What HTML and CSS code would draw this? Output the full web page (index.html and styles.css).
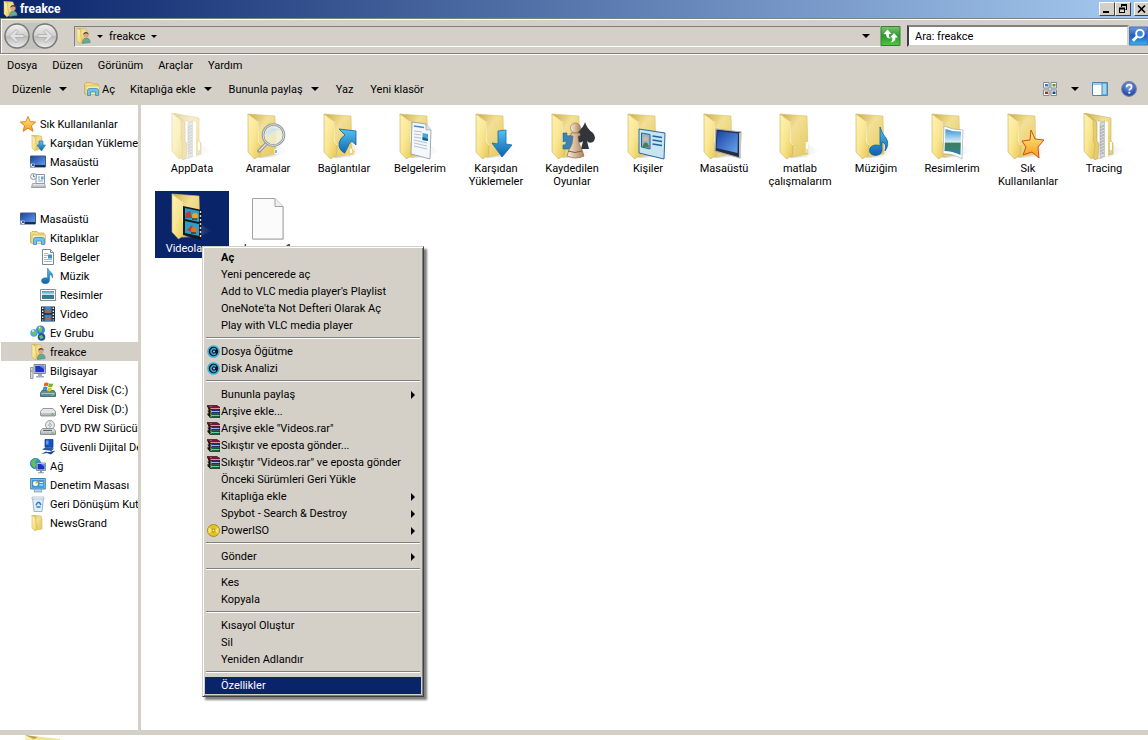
FILE: index.html
```html
<!DOCTYPE html>
<html lang="tr">
<head>
<meta charset="utf-8">
<title>freakce</title>
<link rel="stylesheet" href="styles.css">
</head>
<body>
<svg class="sprite" width="0" height="0" aria-hidden="true">
  <defs>
    <linearGradient id="g-flap" x1="0" y1="0" x2="1" y2="1"><stop offset="0" stop-color="#fdf3b8"/><stop offset=".5" stop-color="#f9e690"/><stop offset="1" stop-color="#e6c655"/></linearGradient>
    <linearGradient id="g-back" x1="0" y1="0" x2="1" y2="1"><stop offset="0" stop-color="#c9ab4c"/><stop offset=".4" stop-color="#f3e095"/><stop offset="1" stop-color="#e5c75c"/></linearGradient>
    <linearGradient id="g-blue" x1="0" y1="0" x2="0" y2="1"><stop offset="0" stop-color="#57c2f2"/><stop offset="1" stop-color="#0b62ad"/></linearGradient>
    <linearGradient id="g-screen" x1="0" y1="0" x2="1" y2="1"><stop offset="0" stop-color="#1742a0"/><stop offset="1" stop-color="#6ba4f2"/></linearGradient>
    <linearGradient id="g-star" x1="0" y1="0" x2="0" y2="1"><stop offset="0" stop-color="#fff08a"/><stop offset="1" stop-color="#f69a1c"/></linearGradient>
    <linearGradient id="g-green" x1="0" y1="0" x2="0" y2="1"><stop offset="0" stop-color="#7cc46d"/><stop offset=".5" stop-color="#2c9a2e"/><stop offset="1" stop-color="#4cc83e"/></linearGradient>
    <linearGradient id="g-find" x1="0" y1="0" x2="0" y2="1"><stop offset="0" stop-color="#6f9be0"/><stop offset=".5" stop-color="#1e5fc4"/><stop offset="1" stop-color="#37b4ee"/></linearGradient>
    <linearGradient id="g-pic" x1="0" y1="0" x2="0" y2="1"><stop offset="0" stop-color="#3f93d6"/><stop offset=".5" stop-color="#d5eef8"/><stop offset=".55" stop-color="#3f7f55"/><stop offset="1" stop-color="#2f7fae"/></linearGradient>
    <linearGradient id="g-pawn" x1="0" y1="0" x2="1" y2="0"><stop offset="0" stop-color="#fbeedc"/><stop offset="1" stop-color="#a9805a"/></linearGradient>
    <linearGradient id="g-nav" x1="0" y1="0" x2="0" y2="1"><stop offset="0" stop-color="#f1f1f1"/><stop offset=".48" stop-color="#cfcfcf"/><stop offset=".52" stop-color="#b9b9b9"/><stop offset="1" stop-color="#ededed"/></linearGradient>
    <radialGradient id="g-help" cx=".5" cy=".3" r=".7"><stop offset="0" stop-color="#7fa7ec"/><stop offset="1" stop-color="#14389c"/></radialGradient>
    <linearGradient id="g-drive" x1="0" y1="0" x2="0" y2="1"><stop offset="0" stop-color="#f4f4f4"/><stop offset="1" stop-color="#a8adb2"/></linearGradient>
    <linearGradient id="g-shade" x1="0" y1="0" x2="1" y2="0"><stop offset="0" stop-color="#999" stop-opacity=".5"/><stop offset="1" stop-color="#ccc" stop-opacity="0"/></linearGradient>
  </defs>

  <symbol id="folder" viewBox="0 0 48 48">
    <path d="M14 45 32 31 44 38 30 44z" fill="url(#g-shade)"/>
    <path d="M4 1 31 3 32 41 14 44z" fill="url(#g-back)" stroke="#d8bf6a" stroke-width=".6"/>
    <path d="M4 1 14 8 14.500 29 17 32 16.500 42 10.500 46 4 39z" fill="url(#g-flap)" stroke="#cdb058" stroke-width=".6"/>
    <path d="M14 8 14.500 29 17 32" fill="none" stroke="#fffbe2" stroke-width=".8"/>
  </symbol>
  <symbol id="folder-full" viewBox="0 0 48 48">
    <path d="M14 45 32 31 44 38 30 44z" fill="url(#g-shade)"/>
    <path d="M4 0 31 5 31 28 33 30 33 41 14 45z" fill="url(#g-back)" stroke="#cdb058" stroke-width=".6"/>
    <path d="M15 7 22 9 22 45 16 46z" fill="#fff" stroke="#b9b39a" stroke-width=".6"/>
    <path d="M20 10 25 8 25 43 20 45z" fill="#d5d8dc" stroke="#a9a9a0" stroke-width=".6"/>
    <path d="M21 13v28M23 12v29" stroke="#8e959c" stroke-width=".8" stroke-dasharray="2 1"/>
    <path d="M25 8 28 9 28 43 25 45z" fill="#fffdf2"/>
    <path d="M9 3 17 9 17 28 19 31 18 45 15 47 9 41z" fill="#e6cc70" stroke="#bfa24b" stroke-width=".6"/>
    <path d="M4 0 13 7 13.500 28 15 31 14 44 11 46 4 38z" fill="url(#g-flap)" stroke="#cdb058" stroke-width=".6"/>
    <path d="M31 29v11" stroke="#fff" stroke-width="2"/><path d="M31 37v3" stroke="#5fb3e0" stroke-width="1"/>
  </symbol>
  <symbol id="folder-mini" viewBox="0 0 16 16">
    <path d="M2 0 11 1 12 4 12 14 6 15z" fill="url(#g-back)" stroke="#c9ab4e" stroke-width=".5"/>
    <path d="M2 0 5.500 2.500 6 9 7 10 7 14 5 16 2 13z" fill="url(#g-flap)" stroke="#c9ab4e" stroke-width=".5"/>
  </symbol>
  <symbol id="folder-user" viewBox="0 0 16 16">
    <use href="#folder-mini" width="16" height="16"/>
    <path d="M7.500 15.500c0-4 1.500-5.500 3.800-5.500s3.900 1.500 3.900 4.500z" fill="#6ba69a" stroke="#47796f" stroke-width=".5"/>
    <circle cx="11" cy="7" r="2.600" fill="#d9a77d"/><path d="M8.200 7c0-4 5.600-4 5.600 0-1-2-4-2-5.600 0z" fill="#5a4130"/>
  </symbol>
  <symbol id="folder-down" viewBox="0 0 16 16">
    <use href="#folder-mini" width="16" height="16"/>
    <path d="M9 6h4v4h2.500L11.500 16 7 10h2z" fill="url(#g-blue)" stroke="#1c6ba4" stroke-width=".6"/>
  </symbol>
  <symbol id="star" viewBox="0 0 16 16"><path d="M8 .5 10.200 5.700 15.700 6 11.500 9.700 13 15.300 8 12.200 3.200 15.300 4.500 9.700.3 6 5.800 5.700z" fill="url(#g-star)" stroke="#d9761a" stroke-width=".9"/></symbol>
  <symbol id="desktop" viewBox="0 0 16 16">
    <path d="M.5 2h15v11h-15z" fill="url(#g-screen)" stroke="#44597c"/><path d="M1 11h14v2H1z" fill="#1b2b4a"/>
    <path d="M.5 9.500h4v4h-4z" fill="#dfe8f3" stroke="#7687a3" stroke-width=".5"/><path d="M1.500 12.500 3.500 10.500M2 10.500h1.500V12" stroke="#1d62b5" fill="none"/>
  </symbol>
  <symbol id="recent" viewBox="0 0 16 16">
    <path d="M6 1.500h8.500v9H6z" fill="#f6f9fc" stroke="#8895a3"/><path d="M8 4h2M8 6h2M8 8h5" stroke="#8fa0b2"/><path d="M11 3.500h2.500v3H11z" fill="#5aa7df"/>
    <path d="M2.500 10.500h12l1 4h-14z" fill="url(#g-drive)" stroke="#85898e" stroke-width=".7"/>
    <circle cx="3.500" cy="3.500" r="3" fill="#eef3f7" stroke="#8796a6"/><path d="M3.500 1.500v2.200h1.700" fill="none" stroke="#56677a" stroke-width=".8"/>
  </symbol>
  <symbol id="library" viewBox="0 0 16 16">
    <path d="M.5 3 2 1.500h5L8.500 3H14v10H.5z" fill="#f3db82" stroke="#cba945" stroke-width=".8"/>
    <path d="M2 5h13.500v8.500H2z" fill="#f9ecb0" stroke="#d3b65c" stroke-width=".7"/>
    <path d="M3.500 14.500V9.500q0-2 2-2h7q2 0 2 2v5h-3v-3.500h-5v3.500z" fill="#6cc3ea" stroke="#2d84b5" stroke-width=".7"/>
  </symbol>
  <symbol id="document" viewBox="0 0 16 16">
    <path d="M2.500.5h8l3 3v12h-11z" fill="#fff" stroke="#7d8791"/><path d="M10.500.5v3h3" fill="#dce3ea" stroke="#7d8791"/>
    <path d="M4 4.500h4M4 6.500h4M4 8.500h3M4 10.500h8M4 12.500h8" stroke="#98a6b5" stroke-width=".8"/><path d="M8 5.500h4v4H8z" fill="#3d93cc"/>
  </symbol>
  <symbol id="note" viewBox="0 0 16 16"><path d="M8 .3C9 4.500 14 4 12.500 10 12.300 7.500 10.500 6.800 9.500 6.500V12.500C9.300 16.500 1.500 17 1.500 12.700 1.500 9.800 5.500 9.300 7.500 10.300V.3z" fill="url(#g-blue)" stroke="#1a6aa8" stroke-width=".5"/></symbol>
  <symbol id="picture" viewBox="0 0 16 16"><path d="M.5 2.500h15v11H.5z" fill="#fff" stroke="#848e98"/><path d="M2 4h12v8H2z" fill="url(#g-pic)"/></symbol>
  <symbol id="video" viewBox="0 0 16 16">
    <path d="M1 .5h14v15H1z" fill="#232a32"/><path d="M4.500 1h7v6.300h-7zM4.500 8.700h7v6.300h-7z" fill="#3589c9"/><path d="M5 5.500 8 3l3 4H5zM5 13l4-3 2 4H5z" fill="#b5613f"/>
    <path d="M2.700 1.500v13M13.300 1.500v13" stroke="#f2f4f5" stroke-width="1.400" stroke-dasharray="1.500 1.500"/>
  </symbol>
  <symbol id="homegroup" viewBox="0 0 16 16">
    <circle cx="10.500" cy="5" r="4.500" fill="#3a86d6"/><circle cx="4" cy="8" r="3.700" fill="#4fa9de"/><circle cx="11.500" cy="12" r="3.800" fill="#1c54ae"/>
    <path d="M7.500 3.500q3-3 5 0l-1 3.500h-2zM2 7l3-1.500L6 9 3 10zM9 11l3-1 1.500 3-3 1z" fill="#74c64c"/><circle cx="9.500" cy="2.500" r="1" fill="#e6f5ff"/><circle cx="3" cy="6" r=".9" fill="#e6f5ff"/>
  </symbol>
  <symbol id="computer" viewBox="0 0 16 16">
    <path d="M4 1.500h11.500v9H4z" fill="#e1e4e8" stroke="#7f868d"/><path d="M5.200 2.700h9.100v6.600H5.200z" fill="#1c34c8"/><path d="M9 2.700h5.300v3.500z" fill="#6486ec"/>
    <path d="M8 11h4v2H8zM6 13h8v1.500H6z" fill="#a4aab1"/><path d="M.5 4.500h2.500v11H.5z" fill="#d4d8dc" stroke="#7f868d" stroke-width=".8"/><path d="M1.700 7v2" stroke="#5fc83e"/>
  </symbol>
  <symbol id="drive" viewBox="0 0 16 16">
    <path d="M3 7.500h10L15.500 10.500V14q0 1-1 1H1.500q-1 0-1-1v-3.500z" fill="url(#g-drive)" stroke="#7b8086" stroke-width=".8"/><path d="M1 11h14" stroke="#fff" stroke-width=".9"/><path d="M11.500 13h2" stroke="#41b632" stroke-width="1.200"/>
  </symbol>
  <symbol id="drive-win" viewBox="0 0 16 16">
    <path d="M2 8.500h12l1.500 2.500v3.500H.5V11z" fill="#5f8d98" stroke="#365963" stroke-width=".8"/><path d="M1 11.500h14" stroke="#bcd5da" stroke-width=".8"/><path d="M11.500 13h2" stroke="#6fe23e" stroke-width="1.200"/>
    <path d="M4.500 1q2-1 4 0L7.700 4.300q-2-1-4 0z" fill="#e8601f"/><path d="M9 1.300q2 1 4.300 0L12.300 4.700q-2 1-4.200 0z" fill="#70b52f"/><path d="M3.500 5q2-1 4 0L6.700 8.300q-2-1-4 0z" fill="#2e8fd8"/><path d="M8 5.400q2 1 4 0L11.200 8.800q-2 1-4 0z" fill="#f3bd22"/>
  </symbol>
  <symbol id="drive-dvd" viewBox="0 0 16 16">
    <circle cx="10" cy="5" r="4.500" fill="#e6e9eb" stroke="#84898e" stroke-width=".8"/><circle cx="10" cy="5" r="1.300" fill="#fff" stroke="#84898e" stroke-width=".7"/><path d="M10 .8v2.500M10 6.500V9" stroke="#a9cfa6"/>
    <path d="M2.500 8.500h11L15.500 11v3.500H.5V11z" fill="url(#g-drive)" stroke="#7b8086" stroke-width=".8"/><path d="M3 10.300h9" stroke="#4a4d50"/><path d="M11.500 13h2" stroke="#41b632"/>
  </symbol>
  <symbol id="drive-sd" viewBox="0 0 16 16">
    <path d="M5 .5h8v8l-8-.5z" fill="#1553c6" stroke="#0a2f80" stroke-width=".7"/><path d="M6 1.500h2.500v4H6z" fill="#5e9bf1"/>
    <path d="M2 10.500 6 8 14 9.500 11.500 12z" fill="#2b55a8"/><path d="M1 15 6 12.500q3 1 5 0L15.500 11.500 11 15.500 7 14z" fill="#174394"/>
  </symbol>
  <symbol id="network" viewBox="0 0 16 16">
    <circle cx="5.500" cy="5.500" r="5.200" fill="#2793df" stroke="#1768ab" stroke-width=".6"/><path d="M1 4q3-4 6-3L5 4.500 7 7 4 10Q1 7 1 4z" fill="#63c04c"/>
    <path d="M6.500 5h9v7.500h-9z" fill="#dfe3e8" stroke="#757e8a" stroke-width=".8"/><path d="M7.500 6h7v5.500h-7z" fill="#1733c4"/><path d="M11 6h3.500v3z" fill="#6f8ff0"/><path d="M10 13h2v1.200h2v1H8v-1h2z" fill="#8f97a0"/>
  </symbol>
  <symbol id="control" viewBox="0 0 16 16">
    <path d="M.7 1.500h14.600v10.500H.7z" fill="#8fc9ea" stroke="#3b7fae"/><path d="M2 2.800h12v8H2z" fill="#3c97d3"/><circle cx="5.500" cy="6.500" r="2.500" fill="#fff"/><path d="M5.500 6.500V4A2.500 2.500 0 0 1 8 6.500z" fill="#f3ad34"/><path d="M9.500 5.500h3.500M9.500 8h3.500" stroke="#fff" stroke-width="1.200"/>
    <path d="M5 12h6l1 3H4z" fill="#b6d4e6" stroke="#5b8fb2" stroke-width=".6"/>
  </symbol>
  <symbol id="recycle" viewBox="0 0 16 16">
    <path d="M2.500 1.500h11l-1.500 14H4z" fill="#e3eff8" stroke="#8ba6bb" stroke-width=".8"/><path d="M2 1h12v2H2z" fill="#f7fbfe" stroke="#8ba6bb" stroke-width=".6"/>
    <path d="M6 9.500 7.500 6.500h2L11 9M10.500 11h-4" fill="none" stroke="#2a7fd2" stroke-width="1.500"/>
  </symbol>
  <symbol id="disk-tool" viewBox="0 0 13 13">
    <circle cx="6.500" cy="6.500" r="5.500" fill="#0f1830" stroke="#37b0d8" stroke-width="1.600"/><path d="M8.800 4.500A2.800 2.800 0 1 0 8.800 8.500" fill="none" stroke="#4fa4c7" stroke-width="1.400"/><circle cx="7" cy="6.500" r="1" fill="#94d3e6"/>
  </symbol>
  <symbol id="rar" viewBox="0 0 13 13">
    <path d="M0 .5h10l3 2v2H2.500z" fill="#7b1437" stroke="#1c060e" stroke-width=".6"/><path d="M4 3.500h9" stroke="#e68aa5"/>
    <path d="M2 5h11v3H3z" fill="#263c93" stroke="#0a0d26" stroke-width=".6"/><path d="M4 6.500h8.500" stroke="#9cb4ef"/>
    <path d="M2 8.700h11V12.500H3z" fill="#17603f" stroke="#06190f" stroke-width=".6"/><path d="M4 10.500h8.500" stroke="#62d39b"/>
    <path d="M0 .5 3 4v8.500L.5 10V8l1 .5V7L0 5.500l1.500.5V4.500z" fill="#17110b"/><path d="M4 1v11.500" stroke="#d9b64a" stroke-width=".8" stroke-dasharray="1 1"/>
  </symbol>
  <symbol id="iso" viewBox="0 0 13 13">
    <circle cx="6.500" cy="6.500" r="6" fill="#e5c320" stroke="#9b7b0c" stroke-width=".8"/><path d="M6.500 6.500 1.500 3.500v6zM6.500 6.500l5-3v6z" fill="#f7e67a"/><path d="M4.700 4.700h3.600v3.600H4.700z" fill="#b3920f"/><circle cx="6.500" cy="6.500" r="1" fill="#f5edc0"/>
  </symbol>
  <symbol id="down" viewBox="0 0 8 4"><path d="M0 0h8L4 4z" fill="#000"/></symbol>
  <symbol id="right" viewBox="0 0 4 8"><path d="M0 0 4 4 0 8z" fill="currentColor"/></symbol>
</svg>

<div class="window">
  <header class="titlebar">
    <svg class="icon"><use href="#folder-user"/></svg>
    <h1 class="titlebar-text">freakce</h1>
    <div class="titlebar-buttons">
      <button class="win-btn" aria-label="Simge durumuna küçült"><svg viewBox="0 0 12 10"><path d="M2 7h6v2H2z"/></svg></button>
      <button class="win-btn" aria-label="Önceki boyut"><svg viewBox="0 0 12 10"><path d="M4 0h6v6H8.500V5H9V2H5v1H4zM2 3.500h6V9H2zM3 5.500V8h4V5.500z" fill-rule="evenodd"/></svg></button>
      <button class="win-btn win-close" aria-label="Kapat"><svg viewBox="0 0 12 10"><path d="M2 1.500 9 8.500M9 1.500 2 8.500" stroke="#000" stroke-width="1.700"/></svg></button>
    </div>
  </header>

  <div class="navbar">
    <div class="travel">
      <button class="travel-btn" aria-label="Geri"><svg viewBox="0 0 26 26"><circle cx="13" cy="13" r="12" fill="url(#g-nav)" stroke="#777" stroke-width="1.400"/><path d="M5.500 13 12 6.500l2 2L11.300 11.500H20v3h-8.700L14 17.500l-2 2z" fill="#e2e2e2" stroke="#a9a9a9" stroke-width=".8"/></svg></button>
      <button class="travel-btn" aria-label="İleri"><svg viewBox="0 0 26 26"><circle cx="13" cy="13" r="12" fill="url(#g-nav)" stroke="#777" stroke-width="1.400"/><path d="M20.500 13 14 6.500l-2 2 2.700 3H6v3h8.700L12 17.500l2 2z" fill="#e2e2e2" stroke="#a9a9a9" stroke-width=".8"/></svg></button>
    </div>
    <div class="address">
      <svg class="icon"><use href="#folder-user"/></svg>
      <button class="crumb" aria-label="Konumlar"><svg class="caret"><use href="#down"/></svg></button>
      <button class="crumb">freakce <svg class="caret"><use href="#down"/></svg></button>
      <button class="crumb address-history" aria-label="Önceki konumlar"><svg class="caret caret-lg"><use href="#down"/></svg></button>
    </div>
    <button class="square-btn" aria-label="Yenile"><svg viewBox="0 0 20 20"><path d="M.5.500h19v19H.5z" fill="url(#g-green)" stroke="#3b7c3a"/><path d="M7 3.500 11 8H8.500Q8 11 10 12.500 5.500 12.500 5.500 8H3z" fill="#fff"/><path d="M13.500 7 17.500 11.500H15Q15 16 10 16.500 12 15 12 11.500H9.500z" fill="#fff"/></svg></button>
    <input class="search" type="text" value="Ara: freakce" aria-label="Ara">
    <button class="square-btn find" aria-label="Aramayı başlat"><svg viewBox="0 0 20 20"><path d="M.5.500h19v19H.5z" fill="url(#g-find)" stroke="#4a6fae"/><circle cx="11.500" cy="7.500" r="4" fill="#3f86dc" stroke="#fff" stroke-width="2"/><path d="M8.500 10.500 4 15" stroke="#fff" stroke-width="3"/></svg></button>
  </div>

  <nav class="menubar">
    <button>Dosya</button><button>Düzen</button><button>Görünüm</button><button>Araçlar</button><button>Yardım</button>
  </nav>

  <div class="toolbar">
    <button>Düzenle <svg class="caret caret-lg"><use href="#down"/></svg></button>
    <button class="tool-open"><svg class="icon"><use href="#library"/></svg>Aç</button>
    <button>Kitaplığa ekle <svg class="caret caret-lg"><use href="#down"/></svg></button>
    <button>Bununla paylaş <svg class="caret caret-lg"><use href="#down"/></svg></button>
    <button>Yaz</button>
    <button>Yeni klasör</button>
    <div class="toolbar-right">
      <button aria-label="Görünüm seçenekleri"><svg class="icon" viewBox="0 0 16 16"><path d="M1.500 1.500h5.500v5.500H1.500zM9 1.500h5.500v5.500H9zM1.500 9h5.500v5.500H1.500zM9 9h5.500v5.500H9z" fill="#fff" stroke="#7c8b9c"/><path d="M3 3h3v2.500H3z" fill="#2f86a8"/><path d="M10.500 3h3v2.500h-3z" fill="#5f9428"/><path d="M3 10.500h3V13H3z" fill="#b8320f"/><path d="M10.500 10.500h3V13h-3z" fill="#1c4488"/></svg></button>
      <button aria-label="Diğer görünümler"><svg class="caret caret-lg"><use href="#down"/></svg></button>
      <button aria-label="Önizleme bölmesi"><svg class="icon" viewBox="0 0 16 16"><path d="M.5 1.500h15v13H.5z" fill="#fff" stroke="#4d86b0"/><path d="M1 2h9v2H1z" fill="#a9c8e0"/><path d="M10 2h5v12h-5z" fill="#9fd8ee" stroke="#4d86b0"/></svg></button>
      <button aria-label="Yardım al"><svg class="icon" viewBox="0 0 16 16"><circle cx="8" cy="8" r="7.300" fill="url(#g-help)" stroke="#6f7fa5" stroke-width="1.200"/><path d="M5.500 6.300Q5.700 3.700 8.200 3.700q2.400 0 2.400 2.200 0 1.300-1.300 2-1 .6-1 1.700" fill="none" stroke="#fff" stroke-width="1.700"/><path d="M7.400 10.800h1.900v1.800H7.400z" fill="#fff"/></svg></button>
    </div>
  </div>

  <div class="main">
    <aside class="tree">
      <ul class="tree-group">
        <li><a href="#" class="node"><svg class="icon"><use href="#star"/></svg>Sık Kullanılanlar</a></li>
        <li><a href="#" class="node level-1"><svg class="icon"><use href="#folder-down"/></svg>Karşıdan Yüklemeler</a></li>
        <li><a href="#" class="node level-1"><svg class="icon"><use href="#desktop"/></svg>Masaüstü</a></li>
        <li><a href="#" class="node level-1"><svg class="icon"><use href="#recent"/></svg>Son Yerler</a></li>
      </ul>
      <ul class="tree-group">
        <li><a href="#" class="node"><svg class="icon"><use href="#desktop"/></svg>Masaüstü</a></li>
        <li><a href="#" class="node level-1"><svg class="icon"><use href="#library"/></svg>Kitaplıklar</a></li>
        <li><a href="#" class="node level-2"><svg class="icon"><use href="#document"/></svg>Belgeler</a></li>
        <li><a href="#" class="node level-2"><svg class="icon"><use href="#note"/></svg>Müzik</a></li>
        <li><a href="#" class="node level-2"><svg class="icon"><use href="#picture"/></svg>Resimler</a></li>
        <li><a href="#" class="node level-2"><svg class="icon"><use href="#video"/></svg>Video</a></li>
        <li><a href="#" class="node level-1"><svg class="icon"><use href="#homegroup"/></svg>Ev Grubu</a></li>
        <li><a href="#" class="node level-1 current" aria-current="page"><svg class="icon"><use href="#folder-user"/></svg>freakce</a></li>
        <li><a href="#" class="node level-1"><svg class="icon"><use href="#computer"/></svg>Bilgisayar</a></li>
        <li><a href="#" class="node level-2"><svg class="icon"><use href="#drive-win"/></svg>Yerel Disk (C:)</a></li>
        <li><a href="#" class="node level-2"><svg class="icon"><use href="#drive"/></svg>Yerel Disk (D:)</a></li>
        <li><a href="#" class="node level-2"><svg class="icon"><use href="#drive-dvd"/></svg>DVD RW Sürücüsü</a></li>
        <li><a href="#" class="node level-2"><svg class="icon"><use href="#drive-sd"/></svg>Güvenli Dijital Depolama</a></li>
        <li><a href="#" class="node level-1"><svg class="icon"><use href="#network"/></svg>Ağ</a></li>
        <li><a href="#" class="node level-1"><svg class="icon"><use href="#control"/></svg>Denetim Masası</a></li>
        <li><a href="#" class="node level-1"><svg class="icon"><use href="#recycle"/></svg>Geri Dönüşüm Kutusu</a></li>
        <li><a href="#" class="node level-1"><svg class="icon"><use href="#folder-mini"/></svg>NewsGrand</a></li>
      </ul>
    </aside>

    <main class="files">
      <a href="#" class="file hidden-file"><svg viewBox="0 0 48 48"><use href="#folder-full"/></svg><span>AppData</span></a>
      <a href="#" class="file"><svg viewBox="0 0 48 48"><use href="#folder"/><path d="M23 30 15 38" stroke="#8f959b" stroke-width="3.500" stroke-linecap="round"/><path d="M23 30 15 38" stroke="#dfe3e6" stroke-width="1.500"/><circle cx="29.500" cy="22" r="10.500" fill="#f0ecd0" fill-opacity=".85" stroke="#8f989f" stroke-width="2.600"/><circle cx="29.500" cy="22" r="10.500" fill="none" stroke="#d9dee2" stroke-width="1"/><path d="M21 20q5-8 16-3-7 0-9 3t-7 0z" fill="#cfe4f2"/><path d="M32 36v5" stroke="#fff" stroke-width="3"/><path d="M32 37v3" stroke="#4ba7da" stroke-width="1.500"/></svg><span>Aramalar</span></a>
      <a href="#" class="file"><svg viewBox="0 0 48 48"><use href="#folder"/><path d="M19 16 36 18 36 32 31.500 28Q25 34 30 42 18 39 19 30 20 25 25 22z" fill="url(#g-blue)" stroke="#14609d" stroke-width=".8"/><path d="M24 42 29 33 35 38 33 42z" fill="#f3d46f"/><path d="M31 36v4" stroke="#fff" stroke-width="2"/></svg><span>Bağlantılar</span></a>
      <a href="#" class="file"><svg viewBox="0 0 48 48"><use href="#folder"/><path d="M16 9 30 11 35 17 34 46 15 41z" fill="#f4f7fb" stroke="#8997a7" stroke-width=".8"/><path d="M30 11v6h5" fill="#d8e0e8" stroke="#8997a7" stroke-width=".6"/><path d="M18 13 28 14.500" stroke="#3d93bd" stroke-width="1.500"/><path d="M18 18 26 19M18 21 25 22M18 24 25 25M18 27 31 30M18 30 31 33M18 33 31 36" stroke="#a7b2be" stroke-width=".8"/><path d="M26.500 20 32 21v7l-5.500-1z" fill="#4ba6d4"/><path d="M26.500 24 32 26v2l-5.500-1z" fill="#155f91"/></svg><span>Belgelerim</span></a>
      <a href="#" class="file"><svg viewBox="0 0 48 48"><use href="#folder"/><path d="M26 18 34 17 34 31 40 32 30 44 20 30 26 31z" fill="url(#g-blue)" stroke="#1b69a5" stroke-width=".8"/></svg><span>Karşıdan Yüklemeler</span></a>
      <a href="#" class="file"><svg viewBox="0 0 48 48"><use href="#folder"/><path d="M15 20h4q-1 4 3 2.500h4V36H15v-4q4 0 3-4l-3 1z" fill="#3c83b4" stroke="#26618b" stroke-width=".6"/><path d="M37 9Q39 16 45 20 49 25 45 29 41 31 39 28L41 36H33L35 28Q32 31 30 28V18Q36 14 37 9z" fill="#32353a"/><circle cx="27.500" cy="15" r="5" fill="url(#g-pawn)" stroke="#8f6b48" stroke-width=".6"/><path d="M23 20h9v3h-2q0 9 4 14l2 6q-8 4-17 0l2-6q4-5 4-14h-2z" fill="url(#g-pawn)" stroke="#8f6b48" stroke-width=".7"/><path d="M20 38q7 3 14 0" fill="none" stroke="#80603e"/></svg><span>Kaydedilen Oyunlar</span></a>
      <a href="#" class="file"><svg viewBox="0 0 48 48"><use href="#folder"/><path d="M15 16 41 20 40 46 15 40z" fill="#c9e3f3" stroke="#286a99"/><path d="M17.500 20 26 21.500V36l-8.500-2z" fill="#8fb8d3" stroke="#27658f"/><circle cx="21.500" cy="26" r="2.500" fill="#d8b68f"/><path d="M18.500 34q1-5 3.500-4.500t3 5z" fill="#507a50"/><path d="M28.500 23 38 24.500M28.500 27 38 28.500M28.500 31 38 32.500" stroke="#22659a" stroke-width="1.300"/></svg><span>Kişiler</span></a>
      <a href="#" class="file"><svg viewBox="0 0 48 48"><use href="#folder"/><path d="M16 16 41 19 40 45 15 38z" fill="#262f42" stroke="#a9b0ba" stroke-width="1.200"/><path d="M17.500 18 38 20.500 37.500 40 16.500 35z" fill="url(#g-screen)"/><path d="M40 20v24" stroke="#c5ccd4" stroke-width="1.800"/></svg><span>Masaüstü</span></a>
      <a href="#" class="file"><svg viewBox="0 0 48 48"><use href="#folder"/><path d="M31 29v11" stroke="#fff" stroke-width="2.500"/><path d="M31 36v4" stroke="#d3b862" stroke-width="1"/></svg><span>matlab çalışmalarım</span></a>
      <a href="#" class="file"><svg viewBox="0 0 48 48"><use href="#folder"/><path d="M28 14Q30 21 34 25 38 31 33 38 35 30 30 29V38C29 44 17 44 17.500 37 18 32 25 31 28 33z" fill="url(#g-blue)" stroke="#155f9c" stroke-width=".8"/></svg><span>Müziğim</span></a>
      <a href="#" class="file"><svg viewBox="0 0 48 48"><use href="#folder"/><path d="M16 13Q25 17 35 17L34 46Q24 40 15 41z" fill="#fff" stroke="#a4aeb6" stroke-width=".7"/><path d="M17.500 16Q26 19 33 18.500L32.500 42Q24 38 16.500 38z" fill="url(#g-pic)"/></svg><span>Resimlerim</span></a>
      <a href="#" class="file"><svg viewBox="0 0 48 48"><use href="#folder"/><path d="M27 17 31 26 40 27 34 34 35 45 28 39 19 42 22 34 18 28 26 27z" fill="url(#g-star)" stroke="#cf4f16"/></svg><span>Sık Kullanılanlar</span></a>
      <a href="#" class="file"><svg viewBox="0 0 48 48"><use href="#folder-full"/></svg><span>Tracing</span></a>
      <a href="#" class="file selected"><svg viewBox="0 0 48 48"><use href="#folder"/><path d="M15 13 34 17 33 47 15 42z" fill="#15181c"/><path d="M17 15 31 18v11l-14-3zM17 28l14 3v12l-14-3z" fill="#2f9dcb"/><path d="M18 20 22 18 24 25 17 25zM19 37 24 32 26 40z" fill="#bb3b34"/><circle cx="27" cy="23" r="3" fill="#e7a92c"/><circle cx="26" cy="37" r="3" fill="#d7781f"/><path d="M24 26h5M23 40h5" stroke="#161616"/><path d="M32.500 18v27" stroke="#d7dbdd" stroke-width="1.400" stroke-dasharray="2 2"/></svg><span>Videolarım</span></a>
      <a href="#" class="file"><svg viewBox="0 0 48 48"><path d="M9 6h22l9 9v32H9z" fill="#bbb" opacity=".5"/><path d="M8.500 5.500H31l8 8V46H8.500z" fill="#fbfbfb" stroke="#a3a3a3"/><path d="M31 5.500v8h8" fill="#eee" stroke="#a3a3a3"/></svg><span>bonuses1</span></a>
    </main>

    <div class="context-menu" role="menu">
      <button role="menuitem" class="default">Aç</button>
      <button role="menuitem">Yeni pencerede aç</button>
      <button role="menuitem">Add to VLC media player's Playlist</button>
      <button role="menuitem">OneNote'ta Not Defteri Olarak Aç</button>
      <button role="menuitem">Play with VLC media player</button>
      <hr>
      <button role="menuitem"><svg class="menu-icon"><use href="#disk-tool"/></svg>Dosya Öğütme</button>
      <button role="menuitem"><svg class="menu-icon"><use href="#disk-tool"/></svg>Disk Analizi</button>
      <hr>
      <button role="menuitem">Bununla paylaş<svg class="submenu"><use href="#right"/></svg></button>
      <button role="menuitem"><svg class="menu-icon"><use href="#rar"/></svg>Arşive ekle...</button>
      <button role="menuitem"><svg class="menu-icon"><use href="#rar"/></svg>Arşive ekle "Videos.rar"</button>
      <button role="menuitem"><svg class="menu-icon"><use href="#rar"/></svg>Sıkıştır ve eposta gönder...</button>
      <button role="menuitem"><svg class="menu-icon"><use href="#rar"/></svg>Sıkıştır "Videos.rar" ve eposta gönder</button>
      <button role="menuitem">Önceki Sürümleri Geri Yükle</button>
      <button role="menuitem">Kitaplığa ekle<svg class="submenu"><use href="#right"/></svg></button>
      <button role="menuitem">Spybot - Search &amp; Destroy<svg class="submenu"><use href="#right"/></svg></button>
      <button role="menuitem"><svg class="menu-icon"><use href="#iso"/></svg>PowerISO<svg class="submenu"><use href="#right"/></svg></button>
      <hr>
      <button role="menuitem">Gönder<svg class="submenu"><use href="#right"/></svg></button>
      <hr>
      <button role="menuitem">Kes</button>
      <button role="menuitem">Kopyala</button>
      <hr>
      <button role="menuitem">Kısayol Oluştur</button>
      <button role="menuitem">Sil</button>
      <button role="menuitem">Yeniden Adlandır</button>
      <hr>
      <button role="menuitem" class="active">Özellikler</button>
    </div>
  </div>

  <footer class="details"><svg width="60" height="60" viewBox="0 0 60 60"><path d="M1 0 36 4 40 60H12z" fill="#f0e39a"/><path d="M1 0 14 9V60L1 50z" fill="#f8f0b8"/><path d="M1 0 14 2 10 4z" fill="#b7a04a"/></svg></footer>
</div>
</body>
</html>
```
FILE: styles.css
```css
:root {
  --face: #d4d0c8;
  --shadow: #808080;
  --navy: #0a246a;
  --font: Roboto, "DejaVu Sans Condensed", sans-serif;
}

* { box-sizing: border-box; }

body {
  margin: 0;
  font: 11px/13px var(--font);
  color: #000;
  background: #fff;
}

button, input { font: inherit; color: inherit; }

button {
  display: flex;
  align-items: center;
  padding: 0;
  border: 0;
  background: none;
  white-space: nowrap;
}

a { color: inherit; text-decoration: none; }

.sprite { position: absolute; }

.window {
  display: flex;
  flex-direction: column;
  height: 100vh;
  overflow: hidden;
  background: var(--face);
}

.icon { flex: none; width: 16px; height: 16px; }
.caret { flex: none; width: 6px; height: 3px; }
.caret-lg { width: 8px; height: 4px; }

/* Title bar */
.titlebar {
  display: flex;
  align-items: center;
  gap: 2px;
  height: 18px;
  padding-left: 2px;
  background: linear-gradient(to right, #0a246a, #a6caf0);
}

.titlebar-text {
  flex: 1;
  margin: 0;
  font-size: 12px;
  line-height: 16px;
  color: #fff;
}

.titlebar-buttons { display: flex; overflow: hidden; }

.win-btn {
  justify-content: center;
  width: 16px;
  height: 14px;
  border: 1px solid;
  border-color: #fff #404040 #404040 #fff;
  background: var(--face);
}
.win-btn svg { flex: none; width: 12px; height: 10px; }
.win-close { margin-left: 3px; margin-right: -2px; }

/* Address row */
.navbar {
  display: flex;
  align-items: center;
  height: 36px;
  padding-left: 3px;
  border: solid var(--shadow);
  border-width: 1px 0 1px 1px;
  box-shadow: inset 1px 1px #fff, 0 1px #fff;
  margin-bottom: 1px;
}

.travel {
  display: flex;
  gap: 2px;
  margin-right: 16px;
  border-radius: 13px;
  background: #c4c2bd;
}
.travel-btn svg { width: 26px; height: 26px; }

.address {
  display: flex;
  flex: 1;
  align-items: center;
  height: 21px;
  border: solid;
  border-width: 1px 0 1px 1px;
  border-color: var(--shadow) #fff #fff var(--shadow);
}
.crumb { gap: 6px; margin-left: 6px; }
.address-history { margin-left: auto; margin-right: 10px; }

.square-btn svg { width: 21px; height: 20px; }

.search {
  width: 222px;
  height: 22px;
  margin-left: 6px;
  padding: 0 6px;
  border: 2px solid;
  border-color: var(--shadow) var(--face) var(--face) #404040;
  background: #fff;
}
.find { width: 19px; overflow: hidden; }

/* Menu and command rows */
.menubar {
  display: flex;
  gap: 15px;
  height: 20px;
  padding-left: 7px;
}

.toolbar {
  display: flex;
  align-items: center;
  height: 30px;
  padding: 0 11px 2px 12px;
}
.toolbar > button { gap: 8px; margin-right: 17px; }
.toolbar > .tool-open { gap: 2px; margin-right: 15px; }
.toolbar-right { display: flex; gap: 13px; margin-left: auto; }

/* Panes */
.main {
  position: relative;
  display: flex;
  flex: 1;
  min-height: 0;
}

.tree {
  flex: none;
  width: 138px;
  padding: 9px 0 0 1px;
  overflow: hidden;
  background: #fff;
}
.tree-group { margin: 0 0 19px; padding: 0; list-style: none; }

.node {
  display: flex;
  align-items: center;
  gap: 4px;
  height: 19px;
  padding-top: 1px;
  padding-left: 19px;
  white-space: nowrap;
}
.level-1 { padding-left: 29px; }
.level-2 { padding-left: 39px; }
.current { background: var(--face); }

.files {
  display: grid;
  flex: 1;
  grid-template-columns: repeat(auto-fill, 74px);
  column-gap: 2px;
  align-content: start;
  margin-left: 3px;
  padding: 6px 0 0 14px;
  background: #fff;
}

.file {
  display: flex;
  flex-direction: column;
  align-items: center;
  align-self: start;
  padding: 2px 0 3px;
  text-align: center;
}
.file > svg { width: 48px; height: 48px; margin-bottom: 1px; }
.hidden-file > svg { opacity: .55; }
.selected { color: #fff; background: var(--navy); }

/* Context menu */
.context-menu {
  position: absolute;
  top: 141px;
  left: 202px;
  width: 222px;
  padding: 1px;
  border: 1px solid;
  border-color: var(--face) #404040 #404040 var(--face);
  outline: 0;
  background: var(--face);
  box-shadow: inset 1px 1px #fff, inset -1px -1px var(--shadow), 3px 3px 2px rgba(0, 0, 0, .5);
}
.context-menu button {
  width: calc(100% - 2px);
  height: 17px;
  margin-left: 1px;
  padding: 0 6px 0 16px;
}
.context-menu button:first-child { margin-top: 1px; }
.context-menu button:last-child { margin-bottom: 1px; }
.context-menu hr {
  height: 2px;
  margin: 3px 2px 4px;
  border: 0;
  border-top: 1px solid var(--shadow);
  border-bottom: 1px solid #fff;
}
.context-menu .default { font-weight: bold; }
.context-menu .active { color: #fff; background: var(--navy); }
.menu-icon { flex: none; width: 13px; height: 13px; margin: 0 1px 0 -14px; }
.submenu { width: 4px; height: 8px; margin-left: auto; }

.details {
  flex: none;
  height: 10px;
  padding-left: 24px;
  overflow: hidden;
  border-top: 5px solid var(--face);
  background: #fff;
}
```
